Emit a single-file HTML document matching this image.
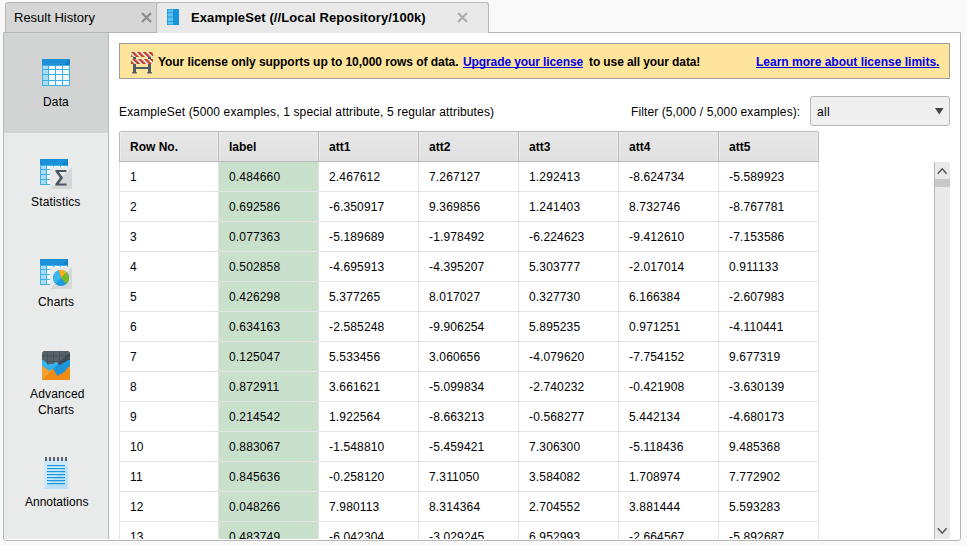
<!DOCTYPE html>
<html><head><meta charset="utf-8">
<style>
*{box-sizing:border-box;margin:0;padding:0}
html,body{width:967px;height:545px;overflow:hidden;background:#f9f9f9;font-family:"Liberation Sans",sans-serif;color:#000}
.abs{position:absolute}
svg{position:absolute;overflow:visible}
#tab1{left:5px;top:2px;width:152px;height:31px;background:#d6d6d6;border:1px solid #b7b7b7;border-radius:3px 0 0 0}
#tab2{z-index:2;left:157px;top:2px;width:332px;height:31px;background:#e9e9e9;border:1px solid #b7b7b7;border-left:none;border-bottom:none;border-radius:3px 3px 0 0}
.tabtxt{position:absolute;font-size:13px;line-height:15px;white-space:nowrap}
#panel{left:3px;top:32px;width:958px;height:509px;background:#fff;border:1px solid #b7b7b7;border-radius:0 0 3px 3px}
#side{left:4px;top:33px;width:105px;height:506px;background:#e9eaea;border-right:1px solid #b9b9b9}
#sel{left:4px;top:33px;width:104px;height:100px;background:#d2d3d3}
.slabel{position:absolute;font-size:12px;line-height:16px;white-space:nowrap;letter-spacing:0.15px}
#banner{left:119px;top:43px;width:831px;height:36px;background:#fee59b;border:1px solid #9d9d9d}
.btxt{position:absolute;top:11px;font-size:12px;line-height:14px;font-weight:bold;white-space:nowrap}
.link{color:#0000ee;text-decoration:underline;text-decoration-skip-ink:none}
.txt{position:absolute;font-size:12px;line-height:14px;white-space:nowrap;letter-spacing:0.15px}
#dd{left:810px;top:96px;width:140px;height:30px;background:#efefef;border:1px solid #b6b6b6;border-radius:3px}
#tw{position:absolute;left:119px;top:131px;width:700px;height:408px;overflow:hidden}
table{position:absolute;left:0;top:0;border-collapse:collapse;font-size:12px;table-layout:fixed;letter-spacing:0.15px}
td,th{height:30px;padding:0 0 0 10px;text-align:left;white-space:nowrap;line-height:14px}
th{background:linear-gradient(#e6e6e6,#e0e0e0);border:1px solid #b9b9b9;font-weight:bold;letter-spacing:0;box-shadow:inset 1px 1px 0 #ececec,inset -1px 0 0 #ececec}
td{border:1px solid #e3e3e3}
td.l{background:#c8e0cc}
col.c0{width:99px}col.c{width:100px}
#sb{left:934px;top:162px;width:16px;height:377px;background:#e8e9e9;border-left:1px solid #b9b9b9}
</style></head><body>
<div class="abs" id="tab1"><span class="tabtxt" style="left:8px;top:7px;letter-spacing:0">Result History</span>
<svg width="12" height="12" style="left:135px;top:9px"><path d="M1 1L10 10M10 1L1 10" stroke="#8c8c8c" stroke-width="2.2"/></svg></div>
<div class="abs" style="left:157px;top:2px;width:4px;height:5px;background:#d6d6d6;border-top:1px solid #b7b7b7"></div>
<div class="abs" id="tab2">
<svg width="12" height="16" style="left:10px;top:6px"><rect x="0" y="0" width="12" height="16" fill="#1a90d6"/><rect x="0.6" y="0.6" width="5.4" height="14.8" fill="#5cc4f2"/><rect x="6" y="0.6" width="5.4" height="14.8" fill="#1696dc"/><rect x="0" y="3" width="12" height="1" fill="#2a8ac4" opacity=".75"/><rect x="0" y="7.5" width="12" height="1" fill="#2a8ac4" opacity=".75"/><rect x="0" y="12" width="12" height="1" fill="#2a8ac4" opacity=".75"/></svg>
<span class="tabtxt" style="left:34px;top:7px;font-weight:bold;letter-spacing:0.1px">ExampleSet (//Local Repository/100k)</span>
<svg width="12" height="12" style="left:300px;top:9px"><path d="M1 1L10 10M10 1L1 10" stroke="#adadad" stroke-width="2.2"/></svg></div>
<div class="abs" id="panel"></div>
<div class="abs" id="side"></div>
<div class="abs" id="sel"></div>

<!-- Data icon -->
<svg width="28" height="27" style="left:42px;top:59px">
<rect x="0" y="0" width="28" height="27" fill="#3cb0ea"/>
<rect x="0" y="0" width="28" height="6" fill="#1b90d9"/>
<path d="M22 6L28 0V6Z" fill="#137fc4"/>
<g fill="#a9dbf5"><rect x="1" y="7" width="5" height="3"/><rect x="1" y="11" width="5" height="4"/><rect x="1" y="16" width="5" height="5"/><rect x="1" y="22" width="5" height="4"/></g>
<g fill="#f4fbfe"><rect x="7" y="7" width="6" height="3"/><rect x="14" y="7" width="6" height="3"/><rect x="21" y="7" width="6" height="3"/>
<rect x="7" y="11" width="6" height="4"/><rect x="14" y="11" width="6" height="4"/><rect x="21" y="11" width="6" height="4"/>
<rect x="7" y="16" width="6" height="5"/><rect x="14" y="16" width="6" height="5"/><rect x="21" y="16" width="6" height="5"/>
<rect x="7" y="22" width="6" height="4"/><rect x="14" y="22" width="6" height="4"/><rect x="21" y="22" width="6" height="4"/></g>
</svg>
<div class="slabel" style="left:43px;top:94px">Data</div>

<!-- Statistics icon -->
<svg width="33" height="30" style="left:40px;top:159px">
<rect x="0" y="0" width="28" height="26" fill="#3cb0ea"/>
<rect x="0" y="0" width="28" height="6" fill="#1b90d9"/>
<path d="M22 6L28 0V6Z" fill="#137fc4"/>
<g fill="#a9dbf5"><rect x="1" y="7" width="5" height="3"/><rect x="1" y="11" width="5" height="4"/><rect x="1" y="16" width="5" height="4"/><rect x="1" y="21" width="5" height="4"/></g>
<g fill="#f4fbfe"><rect x="7" y="7" width="6" height="3"/><rect x="14" y="7" width="6" height="3"/><rect x="21" y="7" width="6" height="3"/>
<rect x="7" y="11" width="6" height="4"/><rect x="7" y="16" width="6" height="4"/><rect x="7" y="21" width="6" height="4"/></g>
<rect x="10" y="8" width="22" height="22" fill="#d4d8d9"/>
<path d="M10 8H32L10 30Z" fill="#e8eaea"/>
<path d="M15.5 11.1H26.4V12.9H18.9L23.1 18.8L18.9 24.6H26.6V26.4H15.5V24.8L19.9 18.8L15.5 12.7Z" fill="#4a5762"/>
</svg>
<div class="slabel" style="left:31px;top:194px">Statistics</div>

<!-- Charts icon -->
<svg width="33" height="30" style="left:40px;top:259px">
<rect x="0" y="0" width="28" height="26" fill="#3cb0ea"/>
<rect x="0" y="0" width="28" height="6" fill="#1b90d9"/>
<path d="M22 6L28 0V6Z" fill="#137fc4"/>
<g fill="#a9dbf5"><rect x="1" y="7" width="5" height="3"/><rect x="1" y="11" width="5" height="4"/><rect x="1" y="16" width="5" height="4"/><rect x="1" y="21" width="5" height="4"/></g>
<g fill="#f4fbfe"><rect x="7" y="7" width="6" height="3"/><rect x="14" y="7" width="6" height="3"/><rect x="21" y="7" width="6" height="3"/>
<rect x="7" y="11" width="6" height="4"/><rect x="7" y="16" width="6" height="4"/><rect x="7" y="21" width="6" height="4"/></g>
<rect x="10" y="8" width="22" height="22" fill="#d4d8d9"/>
<path d="M10 8H32L10 30Z" fill="#e8eaea"/>
<circle cx="21" cy="19" r="8" fill="#1e9be0"/>
<path d="M21 19L15.34 24.66A8 8 0 0 1 18.8 11.3Z" fill="#3bb6ef"/>
<path d="M21 19L18.8 11.3A8 8 0 0 1 26.6 13.3Z" fill="#fbb015"/>
<path d="M21 19L26.6 13.3A8 8 0 0 1 26.4 24.9Z" fill="#76b82a"/>
</svg>
<div class="slabel" style="left:38px;top:294px">Charts</div>

<!-- Advanced charts icon -->
<svg width="28" height="29" style="left:42px;top:351px">
<defs><clipPath id="rc"><rect x="0" y="0" width="28" height="29" rx="2.5"/></clipPath><clipPath id="tri"><path d="M0 29L28 1V29Z"/></clipPath></defs>
<g clip-path="url(#rc)"><rect x="0" y="0" width="28" height="29" fill="#56616a"/><g fill="#47525a"><rect x="5" y="0" width="1" height="16"/><rect x="11" y="0" width="1" height="16"/><rect x="17" y="0" width="1" height="16"/><rect x="23" y="0" width="1" height="16"/><rect x="0" y="4.5" width="28" height="1"/><rect x="0" y="10" width="28" height="1"/></g><path d="M0 9L2 9.5L4 11L6 14L7 13L8 13.5L9 12.5L11 13L13 11.5L15 11L16 12.5L18 14L19 13.5L21 12L23 11L25 9.5L27 9L28 9.5V29H0Z" fill="#36b2ec"/><path d="M0 15L2 16L4 17.5L6 19L7 20L8 19.5L10 18.5L11 18L12 19L13 21L14 23L16 25L17 24L18 23L20 22.5L22 21L24 19L26 16L28 15.5V29H0Z" fill="#f59f30"/><g clip-path="url(#tri)" opacity="0.999"><rect x="0" y="0" width="28" height="29" fill="#434d55"/><g fill="#373f46"><rect x="5" y="0" width="1" height="16"/><rect x="11" y="0" width="1" height="16"/><rect x="17" y="0" width="1" height="16"/><rect x="23" y="0" width="1" height="16"/><rect x="0" y="4.5" width="28" height="1"/><rect x="0" y="10" width="28" height="1"/></g><path d="M0 9L2 9.5L4 11L6 14L7 13L8 13.5L9 12.5L11 13L13 11.5L15 11L16 12.5L18 14L19 13.5L21 12L23 11L25 9.5L27 9L28 9.5V29H0Z" fill="#1c95db"/><path d="M0 15L2 16L4 17.5L6 19L7 20L8 19.5L10 18.5L11 18L12 19L13 21L14 23L16 25L17 24L18 23L20 22.5L22 21L24 19L26 16L28 15.5V29H0Z" fill="#f08b14"/></g></g>
</svg>
<div class="slabel" style="left:30px;top:386px">Advanced</div>
<div class="slabel" style="left:38px;top:402px">Charts</div>

<!-- Annotations icon -->
<svg width="24" height="32" style="left:44px;top:457px">
<rect x="0" y="2" width="24" height="30" fill="#cde9f9"/>
<path d="M0 32L24 8V32Z" fill="#b9e0f6"/>
<g fill="#56636d"><rect x="1" y="0" width="2" height="4"/><rect x="5" y="0" width="2" height="4"/><rect x="9" y="0" width="2" height="4"/><rect x="13" y="0" width="2" height="4"/><rect x="17" y="0" width="2" height="4"/><rect x="21" y="0" width="2" height="4"/></g>
<g fill="#1a9ad8"><rect x="3" y="8" width="18" height="1.2"/><rect x="3" y="11" width="18" height="1.2"/><rect x="3" y="14" width="18" height="1.2"/><rect x="3" y="17" width="18" height="1.2"/><rect x="3" y="20" width="18" height="1.2"/><rect x="3" y="23" width="18" height="1.2"/><rect x="3" y="26" width="18" height="1.2"/></g>
</svg>
<div class="slabel" style="left:25px;top:494px;letter-spacing:0">Annotations</div>

<div class="abs" id="banner">
<svg width="24" height="22" style="left:11px;top:8px">
<defs>
<pattern id="st" width="4.1" height="8" patternUnits="userSpaceOnUse" patternTransform="rotate(-45)"><rect width="4.1" height="8" fill="#dce6ee"/><rect width="2.2" height="8" fill="#c93a15"/></pattern>
</defs>
<g fill="#4d5e6a"><rect x="2" y="4" width="3" height="17"/><rect x="17" y="4" width="3" height="17"/><rect x="4" y="15" width="14" height="2"/><rect x="1" y="20" width="5" height="1.5" rx=".7"/><rect x="16" y="20" width="5" height="1.5" rx=".7"/></g>
<rect x="0" y="0" width="22" height="5" fill="url(#st)"/>
<rect x="0" y="7" width="22" height="5" fill="url(#st)"/>
</svg>
<span class="btxt" style="left:38px;letter-spacing:-0.05px">Your license only supports up to 10,000 rows of data.</span>
<span class="btxt link" style="left:343px;letter-spacing:-0.1px">Upgrade your license</span>
<span class="btxt" style="left:469px;letter-spacing:-0.1px">to use all your data!</span>
<span class="btxt link" style="left:636px">Learn more about license limits.</span>
</div>
<div class="txt" style="left:119px;top:105px">ExampleSet (5000 examples, 1 special attribute, 5 regular attributes)</div>
<div class="txt" style="left:631px;top:105px;letter-spacing:0.1px">Filter (5,000 / 5,000 examples):</div>
<div class="abs" id="dd"><span class="txt" style="left:6px;top:8px;letter-spacing:0.3px">all</span>
<svg width="10" height="8" style="left:124px;top:11px"><path d="M0 0H8.5L4.25 6.5Z" fill="#444"/></svg></div>
<div id="tw">
<table>
<colgroup><col class="c0"><col class="c"><col class="c"><col class="c"><col class="c"><col class="c"><col class="c"></colgroup>
<tr><th>Row No.</th><th>label</th><th>att1</th><th>att2</th><th>att3</th><th>att4</th><th>att5</th></tr>
<tr><td>1</td><td class="l">0.484660</td><td>2.467612</td><td>7.267127</td><td>1.292413</td><td>-8.624734</td><td>-5.589923</td></tr>
<tr><td>2</td><td class="l">0.692586</td><td>-6.350917</td><td>9.369856</td><td>1.241403</td><td>8.732746</td><td>-8.767781</td></tr>
<tr><td>3</td><td class="l">0.077363</td><td>-5.189689</td><td>-1.978492</td><td>-6.224623</td><td>-9.412610</td><td>-7.153586</td></tr>
<tr><td>4</td><td class="l">0.502858</td><td>-4.695913</td><td>-4.395207</td><td>5.303777</td><td>-2.017014</td><td>0.911133</td></tr>
<tr><td>5</td><td class="l">0.426298</td><td>5.377265</td><td>8.017027</td><td>0.327730</td><td>6.166384</td><td>-2.607983</td></tr>
<tr><td>6</td><td class="l">0.634163</td><td>-2.585248</td><td>-9.906254</td><td>5.895235</td><td>0.971251</td><td>-4.110441</td></tr>
<tr><td>7</td><td class="l">0.125047</td><td>5.533456</td><td>3.060656</td><td>-4.079620</td><td>-7.754152</td><td>9.677319</td></tr>
<tr><td>8</td><td class="l">0.872911</td><td>3.661621</td><td>-5.099834</td><td>-2.740232</td><td>-0.421908</td><td>-3.630139</td></tr>
<tr><td>9</td><td class="l">0.214542</td><td>1.922564</td><td>-8.663213</td><td>-0.568277</td><td>5.442134</td><td>-4.680173</td></tr>
<tr><td>10</td><td class="l">0.883067</td><td>-1.548810</td><td>-5.459421</td><td>7.306300</td><td>-5.118436</td><td>9.485368</td></tr>
<tr><td>11</td><td class="l">0.845636</td><td>-0.258120</td><td>7.311050</td><td>3.584082</td><td>1.708974</td><td>7.772902</td></tr>
<tr><td>12</td><td class="l">0.048266</td><td>7.980113</td><td>8.314364</td><td>2.704552</td><td>3.881444</td><td>5.593283</td></tr>
<tr><td>13</td><td class="l">0.483749</td><td>-6.042304</td><td>-3.029245</td><td>6.952993</td><td>-2.664567</td><td>-5.892687</td></tr>
</table>
</div>
<div class="abs" style="left:119px;top:131px;width:1px;height:1px;background:#fff"></div><div class="abs" style="left:818px;top:131px;width:1px;height:1px;background:#fff"></div>
<div class="abs" id="sb">
<div class="abs" style="left:0;top:17px;width:15px;height:8px;background:#c7c8c8"></div>
<svg width="12" height="8" style="left:2px;top:5px"><path d="M0.8 6.8L5.2 1.8L9.6 6.8" stroke="#555" stroke-width="1.5" fill="none"/></svg>
<svg width="12" height="8" style="left:2px;top:365px"><path d="M0.8 1.2L5.2 6.2L9.6 1.2" stroke="#555" stroke-width="1.5" fill="none"/></svg>
</div>
</body></html>
